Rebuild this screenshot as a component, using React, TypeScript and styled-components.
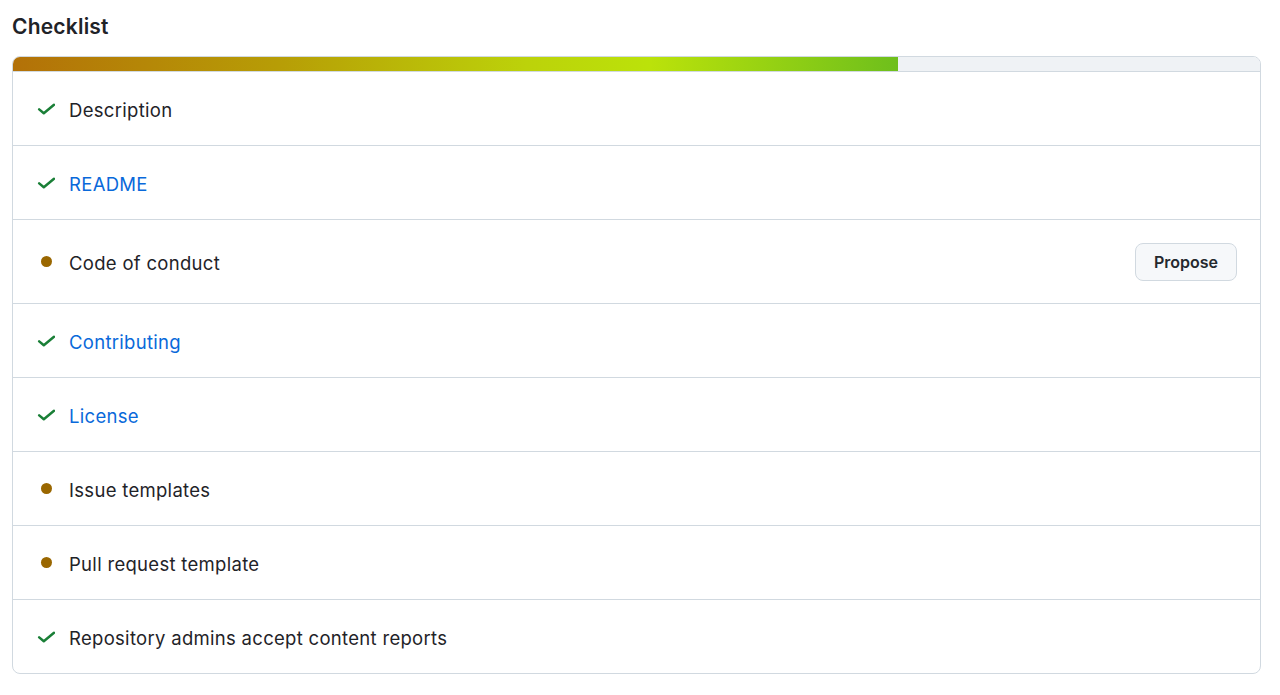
import React from "react";
import styled, { createGlobalStyle } from "styled-components";

const GlobalStyle = createGlobalStyle`
  body {
    margin: 0;
    background: #ffffff;
    font-family: Inter, "Liberation Sans", Arial, sans-serif;
    color: #1f2328;
  }
`;

const Page = styled.div`
  padding: 14px 19px 0 12px;
`;

const Title = styled.h2`
  margin: 0 0 16px 0;
  font-size: 21px;
  line-height: 26px;
  font-weight: 600;
  letter-spacing: 0.2px;
  color: #1f2328;
`;

const Box = styled.div`
  border: 1px solid #d1d9e0;
  border-radius: 8px;
  overflow: hidden;
`;

const Progress = styled.div`
  height: 14px;
  background: #eff2f5;
  border-bottom: 1px solid #d1d9e0;
  display: flex;
`;

const Fill = styled.div`
  height: 100%;
  background: linear-gradient(90deg, #b37108 0%, #b79d06 30%, #bcd20a 58%, #bbe20a 72%, #6ebf1c 100%);
`;

const Row = styled.div`
  display: flex;
  align-items: center;
  gap: 14px;
  min-height: 73px;
  padding: 0 23px 0 24px;
  & + & {
    border-top: 1px solid #d1d9e0;
  }
`;

const Mark = styled.span`
  width: 18px;
  height: 18px;
  display: flex;
  align-items: center;
  justify-content: center;
  flex-shrink: 0;
`;

const Dot = styled.span`
  width: 11px;
  height: 11px;
  border-radius: 50%;
  background: #9a6700;
`;

const Label = styled.span<{ $link?: boolean }>`
  flex: 1;
  padding-top: 3px;
  font-size: 18.5px;
  line-height: 27px;
  letter-spacing: 0.3px;
  color: ${(p) => (p.$link ? "#0969da" : "#1f2328")};
`;

const Button = styled.button`
  margin: 23px 0 22px;
  height: 38px;
  width: 102px;
  border: 1px solid #d1d9e0;
  border-radius: 8px;
  background: #f6f8fa;
  color: #25292e;
  font-family: inherit;
  font-size: 16px;
  font-weight: 600;
  cursor: pointer;
`;

const Check = () => (
  <svg width="18" height="12" viewBox="0 0 18 12">
    <path
      d="M2.2 6.4 L6.8 10.2 L17 1.8"
      fill="none"
      stroke="#1a7f37"
      strokeWidth="2.5"
      strokeLinecap="round"
      strokeLinejoin="round"
    />
  </svg>
);

interface Item {
  label: string;
  done: boolean;
  link?: boolean;
  action?: string;
}

const items: Item[] = [
  { label: "Description", done: true },
  { label: "README", done: true, link: true },
  { label: "Code of conduct", done: false, action: "Propose" },
  { label: "Contributing", done: true, link: true },
  { label: "License", done: true, link: true },
  { label: "Issue templates", done: false },
  { label: "Pull request template", done: false },
  { label: "Repository admins accept content reports", done: true },
];

export default function App() {
  return (
    <Page>
      <GlobalStyle />
      <Title>Checklist</Title>
      <Box>
        <Progress>
          <Fill style={{ width: "71%" }} />
        </Progress>
        {items.map((it) => (
          <Row key={it.label}>
            <Mark>{it.done ? <Check /> : <Dot />}</Mark>
            <Label $link={it.link}>{it.label}</Label>
            {it.action && <Button>{it.action}</Button>}
          </Row>
        ))}
      </Box>
    </Page>
  );
}
